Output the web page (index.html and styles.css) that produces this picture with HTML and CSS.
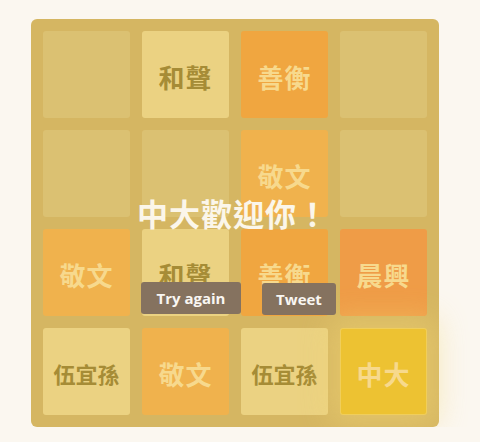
FILE: index.html
```html
<!DOCTYPE html>
<html lang="zh-Hant">
<head>
<meta charset="utf-8">
<title>中大 2048</title>
<link rel="stylesheet" href="styles.css">
</head>
<body>
<div class="page">
  <div class="board">
    <div class="grid">
      <div class="cell"></div>
      <div class="cell t-he">和聲</div>
      <div class="cell t-shan">善衡</div>
      <div class="cell"></div>

      <div class="cell"></div>
      <div class="cell"></div>
      <div class="cell t-jing">敬文</div>
      <div class="cell"></div>

      <div class="cell t-jing">敬文</div>
      <div class="cell t-he">和聲</div>
      <div class="cell t-shan">善衡</div>
      <div class="cell t-chen">晨興</div>

      <div class="cell t-wu">伍宜孫</div>
      <div class="cell t-jing">敬文</div>
      <div class="cell t-wu">伍宜孫</div>
      <div class="cell t-cu">中大</div>
    </div>
    <div class="message">
      <p class="title">中大歡迎你！</p>
      <div class="actions">
        <a class="btn btn-retry">Try again</a>
        <a class="btn btn-tweet">Tweet</a>
      </div>
    </div>
  </div>
</div>
</body>
</html>
```

FILE: styles.css
```css
html, body {
  margin: 0;
  padding: 0;
  background: #fbf7f0;
}
.page {
  padding: 19px 0 0 31px;
}
.board {
  position: relative;
  width: 408px;
  height: 408px;
  box-sizing: border-box;
  padding: 12px;
  background: #d5b662;
  border-radius: 6px;
  font-family: "Noto Sans CJK TC", "Noto Sans", sans-serif;
}
.grid {
  display: grid;
  grid-template-columns: repeat(4, 87px);
  grid-template-rows: repeat(4, 87px);
  gap: 12px;
}
.cell {
  background: #dbc172;
  border-radius: 3px;
  display: flex;
  align-items: center;
  justify-content: center;
  padding-top: 3px;
  box-sizing: border-box;
  font-weight: 700;
  font-size: 26px;
  letter-spacing: 1px;
}
.t-he {
  background: #ebd282;
  color: #a68c36;
}
.t-wu {
  background: #ebd282;
  color: #a68c36;
  font-size: 22px;
  letter-spacing: 0;
}
.t-shan {
  background: #f0a640;
  color: #f7d98d;
}
.t-jing {
  background: #f0b24d;
  color: #f7d98d;
}
.t-chen {
  background: #ef9c47;
  color: #f7d98d;
}
.t-cu {
  background: #edc232;
  color: #f7d98d;
  box-shadow: 0 0 30px 10px rgba(243, 215, 116, 0.45), inset 0 0 0 1px rgba(255, 255, 255, 0.2);
}
.message {
  position: absolute;
  inset: 0;
  display: flex;
  flex-direction: column;
  align-items: center;
}
.title {
  margin: 173px 0 0 -4px;
  font-size: 31px;
  line-height: 42px;
  font-weight: 700;
  color: #fbf6ea;
  letter-spacing: 1px;
}
.actions {
  display: flex;
  gap: 21px;
  margin: 48px 0 0 7px;
}
.btn {
  display: flex;
  align-items: center;
  justify-content: center;
  height: 32px;
  border-radius: 3px;
  background: #85725f;
  color: #f9f6f2;
  font-family: "Open Sans", "Noto Sans", sans-serif;
  font-weight: 700;
  font-size: 15px;
}
.btn-retry {
  width: 100px;
}
.btn-tweet {
  width: 74px;
  margin-top: 1px;
}
```
